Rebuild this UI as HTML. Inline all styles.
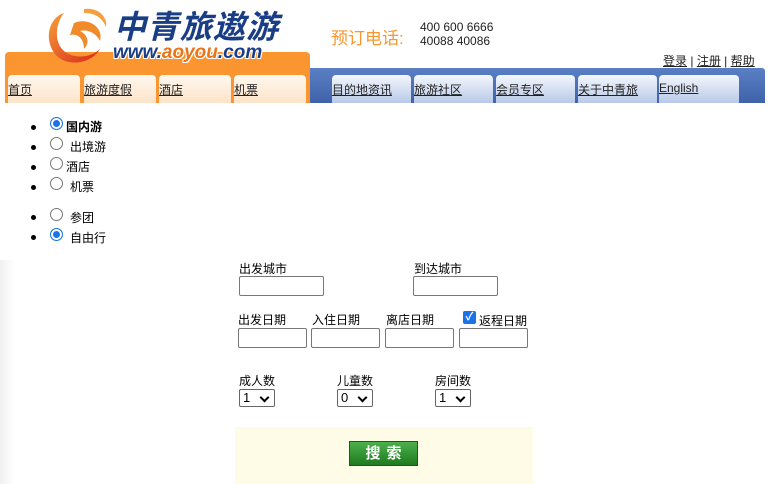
<!DOCTYPE html>
<html><head><meta charset="utf-8"><style>
*{margin:0;padding:0;box-sizing:border-box}
body{width:771px;height:484px;position:relative;overflow:hidden;background:#fff;font-family:"Liberation Sans","Noto Sans CJK SC",sans-serif;font-size:12px;color:#000}
.a{position:absolute}
.tab{position:absolute;top:75px;height:28px;border-radius:4px 4px 0 0;padding-top:6px;font-size:12px;text-decoration:underline;color:#222}
.o{background:linear-gradient(#fff8f0,#fde3c8)}
.b{background:linear-gradient(#f4f7fd,#b8c9e8)}
.inp{position:absolute;height:20px;border:1px solid #777;border-radius:2px;background:#fff}
.sel{position:absolute;height:18px;width:36px;border:1px solid #666;border-radius:2px;font-size:13px;padding-left:3px;line-height:16px}
.sel:after{content:"";position:absolute;right:6px;top:4px;width:5px;height:5px;border-right:2px solid #000;border-bottom:2px solid #000;transform:rotate(45deg)}
.rad{position:absolute;width:13px;height:13px;border:1px solid #777;border-radius:50%;background:#fff}
.rad.on{border:1px solid #1a73e8;box-shadow:inset 0 0 0 2px #fff;background:#1a73e8}
.dot{position:absolute;width:5px;height:5px;border-radius:50%;background:#000}
</style></head><body>
<div class="a" style="left:0;top:260px;width:14px;height:224px;background:linear-gradient(90deg,#f0f0f0,#fff)"></div>
<div class="a" style="left:5px;top:52px;width:305px;height:51px;background:#fb9530;border-radius:4px 4px 0 0"></div>
<div class="a" style="left:310px;top:68px;width:455px;height:35px;background:linear-gradient(#5a7fc4,#3f63aa);border-radius:0 3px 0 0"></div>
<svg class="a" style="left:44px;top:5px" width="66" height="62" viewBox="0 0 66 62">
<defs><linearGradient id="g" x1="0" y1="0" x2="1" y2="1"><stop offset="0" stop-color="#f6a13a"/><stop offset="1" stop-color="#d8261b"/></linearGradient></defs>
<path d="M20 8 C2 14 0 40 14 52 C26 62 48 58 56 44 C46 54 26 54 18 44 C10 34 12 18 20 8Z" fill="url(#g)"/>
<path d="M30 18 C44 12 60 22 56 36 C52 28 44 24 36 26 C44 30 46 38 40 44 C40 34 34 28 26 30 Z" fill="#f08a2a"/>
<path d="M40 4 C54 2 64 12 62 22 C58 12 50 8 40 8Z" fill="#f4a040"/>
</svg>
<div class="a" style="left:114px;top:9px;font-size:32px;line-height:36px;font-weight:bold;font-style:italic;color:#1a3e86;letter-spacing:1px">中青旅遨游</div>
<div class="a" style="left:113px;top:42px;font-size:19px;line-height:22px;font-weight:bold;font-style:italic;color:#1a3e86;text-shadow:1px 1px 0 #fff,-1px -1px 0 #fff,1px -1px 0 #fff,-1px 1px 0 #fff"><span>www.</span><span style="color:#e8751c">aoyou</span><span>.com</span></div>
<div class="a" style="left:331px;top:24px;font-size:17px;color:#f7962f">预订电话:</div>
<div class="a" style="left:420px;top:20px;font-size:12px;line-height:14px;color:#222">400 600 6666<br>40088 40086</div>
<div class="a" style="left:663px;top:52px;font-size:12px;color:#222"><u>登录</u> | <u>注册</u> | <u>帮助</u></div>
<div class="tab o" style="left:8px;width:72px">首页</div>
<div class="tab o" style="left:84px;width:72px">旅游度假</div>
<div class="tab o" style="left:159px;width:72px">酒店</div>
<div class="tab o" style="left:234px;width:72px">机票</div>
<div class="tab b" style="left:332px;width:79px">目的地资讯</div>
<div class="tab b" style="left:414px;width:79px">旅游社区</div>
<div class="tab b" style="left:496px;width:79px">会员专区</div>
<div class="tab b" style="left:578px;width:79px">关于中青旅</div>
<div class="tab b" style="left:659px;width:80px">English</div>
<div class="dot" style="left:31px;top:125px"></div><div class="rad on" style="left:50px;top:117px"></div><div class="a" style="left:66px;top:118px;font-weight:bold">国内游</div>
<div class="dot" style="left:31px;top:145px"></div><div class="rad" style="left:50px;top:137px"></div><div class="a" style="left:70px;top:138px">出境游</div>
<div class="dot" style="left:31px;top:165px"></div><div class="rad" style="left:50px;top:157px"></div><div class="a" style="left:66px;top:158px">酒店</div>
<div class="dot" style="left:31px;top:185px"></div><div class="rad" style="left:50px;top:177px"></div><div class="a" style="left:70px;top:178px">机票</div>
<div class="dot" style="left:31px;top:215px"></div><div class="rad" style="left:50px;top:208px"></div><div class="a" style="left:70px;top:209px">参团</div>
<div class="dot" style="left:31px;top:235px"></div><div class="rad on" style="left:50px;top:228px"></div><div class="a" style="left:70px;top:229px">自由行</div>
<div class="a" style="left:239px;top:260px">出发城市</div>
<div class="a" style="left:414px;top:260px">到达城市</div>
<div class="inp" style="left:239px;top:276px;width:85px"></div>
<div class="inp" style="left:413px;top:276px;width:85px"></div>
<div class="a" style="left:238px;top:311px">出发日期</div>
<div class="a" style="left:312px;top:311px">入住日期</div>
<div class="a" style="left:386px;top:311px">离店日期</div>
<div class="a" style="left:463px;top:311px;width:13px;height:13px;background:#1a73e8;border-radius:2px;color:#fff;font-size:11px;line-height:13px;text-align:center;font-weight:bold">✓</div>
<div class="a" style="left:479px;top:312px">返程日期</div>
<div class="inp" style="left:238px;top:328px;width:69px"></div>
<div class="inp" style="left:311px;top:328px;width:69px"></div>
<div class="inp" style="left:385px;top:328px;width:69px"></div>
<div class="inp" style="left:459px;top:328px;width:69px"></div>
<div class="a" style="left:239px;top:372px">成人数</div>
<div class="a" style="left:337px;top:372px">儿童数</div>
<div class="a" style="left:435px;top:372px">房间数</div>
<div class="sel" style="left:239px;top:389px">1</div>
<div class="sel" style="left:337px;top:389px">0</div>
<div class="sel" style="left:435px;top:389px">1</div>
<div class="a" style="left:235px;top:427px;width:298px;height:57px;background:#fefbe6"></div>
<div class="a" style="left:349px;top:441px;width:69px;height:25px;background:linear-gradient(#4cb04c,#1e7a1e);border:1px solid #1a5a1a;color:#fff;font-weight:bold;font-size:15px;text-align:center;line-height:23px;letter-spacing:6px;text-indent:6px">搜索</div>
</body></html>
